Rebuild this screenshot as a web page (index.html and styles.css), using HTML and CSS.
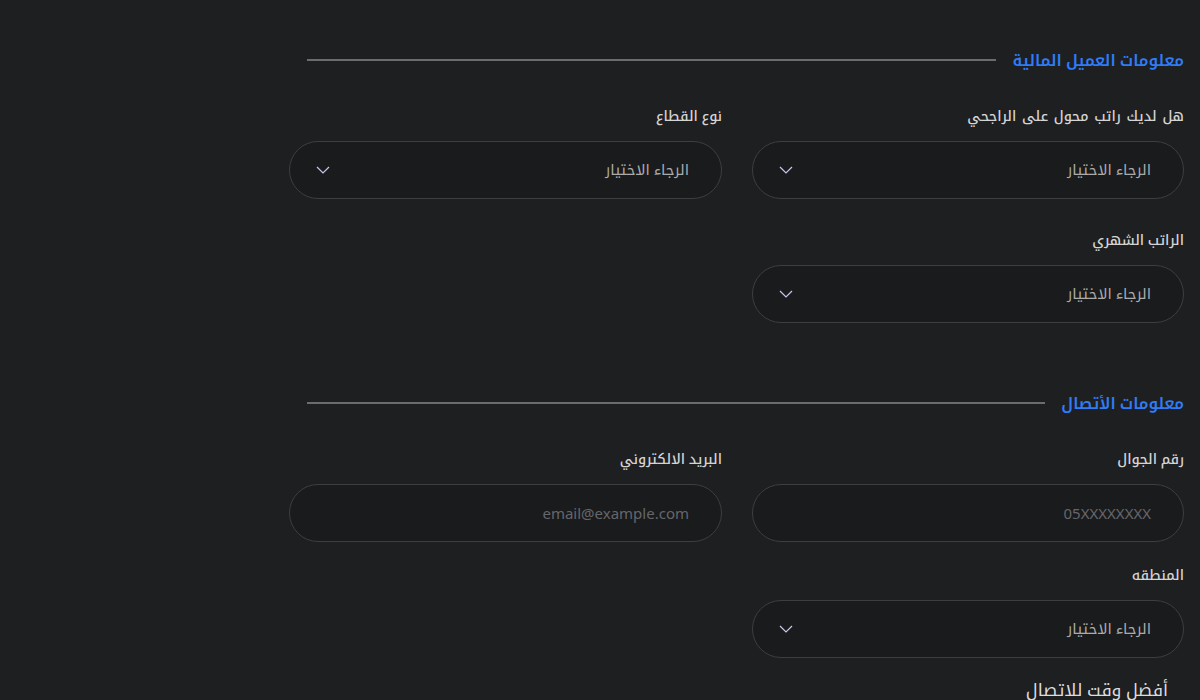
FILE: index.html
```html
<!DOCTYPE html>
<html lang="ar" dir="rtl">
<head>
<meta charset="utf-8">
<link rel="stylesheet" href="styles.css">
</head>
<body>
<form class="form">
  <section class="section">
    <div class="section-head">
      <h2 class="section-title">معلومات العميل المالية</h2>
      <span class="section-line"></span>
    </div>
    <div class="grid">
      <div class="field">
        <label class="label label-wide">هل لديك راتب محول على الراجحي</label>
        <div class="control select"><span class="value">الرجاء الاختيار</span><svg class="chev" viewBox="0 0 14 8" width="14" height="8"><path d="M1 1l6 6 6-6" fill="none" stroke="currentColor" stroke-width="1.2"/></svg></div>
      </div>
      <div class="field">
        <label class="label">نوع القطاع</label>
        <div class="control select"><span class="value">الرجاء الاختيار</span><svg class="chev" viewBox="0 0 14 8" width="14" height="8"><path d="M1 1l6 6 6-6" fill="none" stroke="currentColor" stroke-width="1.2"/></svg></div>
      </div>
      <div class="field">
        <label class="label">الراتب الشهري</label>
        <div class="control select"><span class="value">الرجاء الاختيار</span><svg class="chev" viewBox="0 0 14 8" width="14" height="8"><path d="M1 1l6 6 6-6" fill="none" stroke="currentColor" stroke-width="1.2"/></svg></div>
      </div>
    </div>
  </section>
  <section class="section section-2">
    <div class="section-head">
      <h2 class="section-title">معلومات الأتصال</h2>
      <span class="section-line"></span>
    </div>
    <div class="grid grid-tight">
      <div class="field">
        <label class="label">رقم الجوال</label>
        <div class="control"><span class="placeholder">05XXXXXXXX</span></div>
      </div>
      <div class="field">
        <label class="label">البريد الالكتروني</label>
        <div class="control"><span class="placeholder">email@example.com</span></div>
      </div>
      <div class="field">
        <label class="label">المنطقه</label>
        <div class="control select"><span class="value">الرجاء الاختيار</span><svg class="chev" viewBox="0 0 14 8" width="14" height="8"><path d="M1 1l6 6 6-6" fill="none" stroke="currentColor" stroke-width="1.2"/></svg></div>
      </div>
    </div>
    <div class="best-time">أفضل وقت للاتصال</div>
  </section>
</form>
</body>
</html>
```
FILE: styles.css
```css
* { box-sizing: border-box; }
html, body {
  margin: 0;
  padding: 0;
  background: #1e1f21;
  height: 100%;
  overflow: hidden;
}
body {
  font-family: "Noto Sans", "Noto Kufi Arabic", sans-serif;
  color: #d2d2d2;
}
.form {
  width: 895px;
  margin-right: 16px;
  margin-left: auto;
  padding-top: 46px;
}
.section-head {
  display: flex;
  align-items: center;
  gap: 16px;
  padding-left: 18px;
}
.section-title {
  margin: 0;
  font-size: 16px;
  font-weight: 600;
  color: #2f7cf6;
  line-height: 28px;
  white-space: nowrap;
}
.section-line {
  flex: 1;
  height: 2px;
  background: #6a6c70;
}
.grid {
  display: grid;
  grid-template-columns: 432px 433px;
  column-gap: 30px;
  row-gap: 30px;
  margin-top: 31px;
}
.grid-tight {
  row-gap: 22px;
  margin-top: 31px;
}
.field {
  display: flex;
  flex-direction: column;
  gap: 14px;
}
.label {
  font-size: 14px;
  font-weight: 500;
  line-height: 22px;
  color: #d4d4d4;
}
.label-wide {
  word-spacing: 2px;
}
.control {
  height: 58px;
  border: 1px solid #3d3e41;
  border-radius: 29px;
  background: #1a1b1d;
  display: flex;
  align-items: center;
  padding: 0 32px 0 26px;
  justify-content: space-between;
}
.value {
  font-size: 15px;
  color: #ababab;
}
.placeholder {
  font-size: 15px;
  color: #66666a;
}
.chev {
  color: #c9c8ea;
  display: block;
}
.section-2 {
  margin-top: 66px;
}
.best-time {
  margin-top: 18px;
  padding-right: 16px;
  font-size: 17.5px;
  color: #dcdcdc;
  line-height: 26px;
}
```
